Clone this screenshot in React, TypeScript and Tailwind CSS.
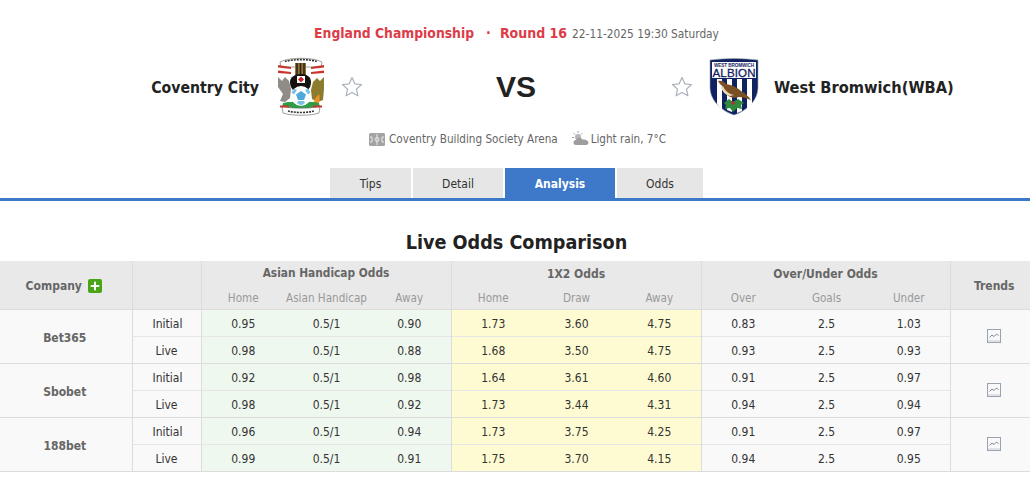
import { LuPlus } from "react-icons/lu";

const font = "font-['DejaVu_Sans_Condensed','Liberation_Sans',sans-serif]";

const rows = [
  {
    name: "Bet365",
    initial: ["0.95", "0.5/1", "0.90", "1.73", "3.60", "4.75", "0.83", "2.5", "1.03"],
    live: ["0.98", "0.5/1", "0.88", "1.68", "3.50", "4.75", "0.93", "2.5", "0.93"],
  },
  {
    name: "Sbobet",
    initial: ["0.92", "0.5/1", "0.98", "1.64", "3.61", "4.60", "0.91", "2.5", "0.97"],
    live: ["0.98", "0.5/1", "0.92", "1.73", "3.44", "4.31", "0.94", "2.5", "0.94"],
  },
  {
    name: "188bet",
    initial: ["0.96", "0.5/1", "0.94", "1.73", "3.75", "4.25", "0.91", "2.5", "0.97"],
    live: ["0.99", "0.5/1", "0.91", "1.75", "3.70", "4.15", "0.94", "2.5", "0.95"],
  },
];

const Star = () => (
  <svg width="22" height="22" viewBox="0 0 22 22" fill="#fff" stroke="#a9b0bb" strokeWidth="1.2" strokeLinejoin="round">
    <path d="M11 1.5l2.800 6.300 6.700.700-5 4.600 1.400 6.700L11 16.400l-5.900 3.400 1.400-6.700-5-4.600 6.700-.700z" />
  </svg>
);

const CoventryBadge = () => (
  <svg width="48" height="60" viewBox="0 0 48 60">
    <path d="M3 5C12 0 36 0 45 5l-1 5H4z" fill="#fff" stroke="#777" strokeWidth="0.7" />
    <path d="M8 4.500c8-2.500 24-2.500 32 0" fill="none" stroke="#333" strokeWidth="1.600" strokeDasharray="2 1" />
    <path d="M1 8l13 2v2L1 10.500zM47 8l-13 2v2l13-1.500z" fill="#c8372e" />
    <path d="M1 13.500l13 1.500v2L1 16zM47 13.500l-13 1.500v2l13-1z" fill="#c8372e" />
    <rect x="18" y="6" width="11" height="12" fill="#93723a" />
    <path d="M20 6v12M23.500 6v12M27 6v12" stroke="#2a2010" strokeWidth="1.500" />
    <path d="M13 25c0-5 5-8 11-8s10 3 10 8c0 3-1 6-3 8H16c-2-2-3-5-3-8z" fill="#15130f" />
    <rect x="20" y="19" width="8" height="7" fill="#fff" />
    <path d="M24 19.500l3 3-3 3-3-3z" fill="#c8272e" />
    <path d="M1 20l4 4 3-4 4 4 2 8-1 9-5 4-5-1 3-7-5-7z" fill="#8f8c88" />
    <path d="M47 20l-4 4-3-3-4 4-2 8 1 9 6 3 5-2 1-11z" fill="#8e7c2e" />
    <path d="M37 46c0-5 3-6 5-9 1 4 1 8-1 11z" fill="#e8932a" />
    <path d="M6 46c8-2 28-2 36 0l1 5H5z" fill="#2f9d45" />
    <circle cx="24" cy="39" r="10" fill="#fff" />
    <path d="M24 34l5 3.500-2 5.500h-6l-2-5.500z" fill="#4fa9dd" />
    <path d="M17 31.500l-2.500 4 2.500 2 3-4.500zM31 31.500l2.500 4-2.500 2-3-4.500zM20 46l1-2h6l1 2-4 2.500z" fill="#7cc0e6" />
    <path d="M5 49c8 3 30 3 38 0l-1 7c-8 3-28 3-36 0z" fill="#fff" stroke="#777" strokeWidth="0.7" />
    <path d="M3 49.500h9M36 49.500h9" stroke="#c8372e" strokeWidth="2" />
    <path d="M11 54c8 2 18 2 26 0" fill="none" stroke="#333" strokeWidth="1.600" strokeDasharray="2 1" />
  </svg>
);

const AlbionBadge = () => (
  <svg width="50" height="58" viewBox="0 0 50 58">
    <path d="M1 2c16-2 32-2 48 0v27c0 14-12 24-24 28C13 53 1 43 1 29z" fill="#10225f" stroke="#9aa0b5" strokeWidth="0.6" />
    <rect x="3" y="4" width="44" height="16" fill="#fff" />
    <text x="25" y="9" textAnchor="middle" fontSize="4.600" fontWeight="700" fill="#10225f" fontFamily="Liberation Sans" textLength="40">
      WEST BROMWICH
    </text>
    <text x="25" y="18.500" textAnchor="middle" fontSize="11.500" fill="#10225f" fontFamily="Liberation Sans" textLength="43" stroke="#10225f" strokeWidth="0.3">
      ALBION
    </text>
    <path d="M8 21h5v31l-5-6zM18 21h5v33l-5-2zM28 21h5v32l-5 2zM38 21h5v25l-5 6z" fill="#fff" />
    <path d="M9 23c3-1 6 0 8 3 6 1 12 4 15 7 4 2 8 6 10 9-5-2-9-3-12-3-6 2-12 0-15-6-1-4-2-6-4-7z" fill="#7a4f24" />
    <path d="M14 28c2 5 6 8 11 9l-4 1c-5-1-8-5-9-9z" fill="#e9d9b2" />
    <path d="M15 45l5-4 4 3 5-3 6 4-3 2 1 4-5-1-4 4-3-4-5 1 1-4z" fill="#2f8a3f" />
    <circle cx="24" cy="45" r="1.800" fill="#c02a2e" />
  </svg>
);

const StadiumIcon = () => (
  <svg width="16" height="13" viewBox="0 0 16 13">
    <rect width="16" height="13" rx="1.500" fill="#a3a3a3" />
    <path d="M8 1v11M1 4h2v5H1M15 4h-2v5h2" stroke="#e8e8e8" fill="none" />
    <circle cx="8" cy="6.500" r="2" stroke="#e8e8e8" fill="none" />
  </svg>
);

const WeatherIcon = () => (
  <svg width="17" height="16" viewBox="0 0 17 16" className="-mt-[3px]">
    <path d="M6 1v2M1.500 3l1.500 1.500M0 7.500h2M10.500 3L9 4.500" stroke="#a3a3a3" strokeWidth="1" />
    <circle cx="6" cy="7" r="3" fill="#b5b5b5" />
    <path d="M4 15a2.500 2.500 0 0 1 0-5c.5-2.500 5-3 6.500-.5 3-.5 6 1 6 3 0 1.500-1 2.500-2.500 2.500z" fill="#9d9d9d" />
  </svg>
);

const TrendIcon = () => (
  <svg width="14" height="14" viewBox="0 0 14 14" fill="none" className="mx-auto">
    <rect x="0.500" y="0.500" width="13" height="13" stroke="#9aa3b0" strokeWidth="1" />
    <path d="M2.500 8.500l2.500-2.500 2 1.500 2.500-2.500 2 1.500" stroke="#7f8896" strokeWidth="1" />
    <path d="M1 12h12" stroke="#c6cad0" />
  </svg>
);

const Tab = ({ label, width, active }: { label: string; width: string; active?: boolean }) => (
  <div
    className={`${width} h-[30px] pt-[2px] flex items-center justify-center text-xs ${
      active ? "bg-[#3d78c9] text-white font-bold" : "bg-[#e6e6e6] text-[#333]"
    }`}
  >
    {label}
  </div>
);

const cellBg = (i: number) => {
  if (i < 3) return "bg-[#eff8ef]";
  if (i < 6) return "bg-[#fefbd2]";
  return "bg-[#f9f9f9]";
};

const OddsCells = ({ values }: { values: string[] }) => (
  <>
    {values.map((v, i) => (
      <td
        key={i}
        className={`${cellBg(i)} text-center p-0 pt-[2px] ${i === 2 || i === 5 || i === 8 ? "border-r border-[#dcdcdc]" : ""}`}
      >
        {v}
      </td>
    ))}
  </>
);

export default function App() {
  return (
    <div className={`${font} w-[1030px] h-[479px] bg-white overflow-hidden text-xs text-[#333]`}>
      <div className="pt-[24px] h-[43px] flex items-baseline justify-center pl-[3px]">
        <span className="text-[13.8px] font-bold text-[#dc3b47]">England Championship</span>
        <span className="text-[14px] font-bold text-[#dc3b47] ml-[12px] mr-[9px]">·</span>
        <span className="text-[14px] font-bold text-[#dc3b47]">Round 16</span>
        <span className="text-[11.8px] text-[#666] ml-[5px]">22-11-2025 19:30 Saturday</span>
      </div>

      <div className="grid grid-cols-[363px_308px_1fr] h-[60px] mt-[14px] items-center">
        <div className="flex items-center justify-end">
          <span className="text-[15.7px] font-bold text-[#222] pt-[2px]">Coventry City</span>
          <div className="ml-[18px] mr-[16px]">
            <CoventryBadge />
          </div>
          <Star />
        </div>
        <div className="text-center text-[30px] font-bold text-[#222] font-['Liberation_Sans',sans-serif] pr-[2px]">VS</div>
        <div className="flex items-center">
          <Star />
          <div className="ml-[16px] mr-[15px]">
            <AlbionBadge />
          </div>
          <span className="text-[16.3px] font-bold text-[#222] pt-[2px]">West Bromwich(WBA)</span>
        </div>
      </div>

      <div className="flex items-center justify-center gap-[14px] mt-[13px] h-[20px] text-[11.6px] text-[#666] pl-[5px]">
        <div className="flex items-center gap-[4px]">
          <StadiumIcon />
          <span>Coventry Building Society Arena</span>
        </div>
        <div className="flex items-center gap-[2px]">
          <WeatherIcon />
          <span>Light rain, 7°C</span>
        </div>
      </div>

      <div className="flex justify-center gap-[2px] mt-[18px] pl-[3px]">
        <Tab label="Tips" width="w-[81px]" />
        <Tab label="Detail" width="w-[90px]" />
        <Tab label="Analysis" width="w-[110px]" active />
        <Tab label="Odds" width="w-[86px]" />
      </div>
      <div className="h-[3px] bg-[#3d78c9]" />

      <h2 className="h-[60px] pt-[28px] pl-[3px] text-center text-[19.6px] leading-[28px] font-bold text-[#222]">
        Live Odds Comparison
      </h2>

      <table className="w-[1030px] table-fixed border-collapse whitespace-nowrap">
        <colgroup>
          <col className="w-[132px]" />
          <col className="w-[69px]" />
          <col className="w-[84px]" />
          <col className="w-[83px]" />
          <col className="w-[83px]" />
          <col className="w-[84px]" />
          <col className="w-[83px]" />
          <col className="w-[83px]" />
          <col className="w-[84px]" />
          <col className="w-[83px]" />
          <col className="w-[82px]" />
          <col className="w-[80px]" />
        </colgroup>
        <thead>
          <tr className="h-[24px] bg-[#e9e9e9] text-[#666] font-bold">
            <th rowSpan={2} className="border-r border-b border-[#dcdcdc] p-0 pt-[2px] pr-[4px]">
              <span className="inline-flex items-center gap-[6px]">
                Company
                <span className="w-[14px] h-[14px] rounded-[2px] bg-[#4aa516] flex items-center justify-center">
                  <LuPlus className="text-white" size={12} strokeWidth={4} />
                </span>
              </span>
            </th>
            <th rowSpan={2} className="border-r border-b border-[#dcdcdc] p-0" />
            <th colSpan={3} className="border-r border-[#dcdcdc] p-0 pt-[2px] text-[11.8px]">
              Asian Handicap Odds
            </th>
            <th colSpan={3} className="border-r border-[#dcdcdc] p-0 pt-[2px]">
              1X2 Odds
            </th>
            <th colSpan={3} className="border-r border-[#dcdcdc] p-0 pt-[2px]">
              Over/Under Odds
            </th>
            <th rowSpan={2} className="border-b border-[#dcdcdc] p-0 pt-[2px] pl-[8px]">
              Trends
            </th>
          </tr>
          <tr className="h-[24px] bg-[#e9e9e9] text-[#999] font-normal border-b border-[#dcdcdc]">
            {["Home", "Asian Handicap", "Away", "Home", "Draw", "Away", "Over", "Goals", "Under"].map((h, i) => (
              <th key={i} className={`font-normal text-[11.6px] p-0 pt-[3px] ${i % 3 === 2 ? "border-r border-[#dcdcdc]" : ""}`}>
                {h}
              </th>
            ))}
          </tr>
        </thead>
        <tbody className="text-[#333]">
          {rows.map((r) => [
            <tr key={r.name + "-initial"} className="h-[27px] border-b border-[#e6e6e6]">
              <td rowSpan={2} className="bg-[#f9f9f9] text-center font-bold text-[#666] border-r border-b border-[#dcdcdc] p-0 pt-[4px] pr-[2px]">
                {r.name}
              </td>
              <td className="bg-[#f9f9f9] text-center border-r border-[#dcdcdc] p-0 pt-[2px] pl-[2px]">Initial</td>
              <OddsCells values={r.initial} />
              <td rowSpan={2} className="bg-[#f9f9f9] border-b border-[#dcdcdc] p-0 pl-[8px]">
                <TrendIcon />
              </td>
            </tr>,
            <tr key={r.name + "-live"} className="h-[27px] border-b border-[#dcdcdc]">
              <td className="bg-[#f9f9f9] text-center border-r border-[#dcdcdc] p-0 pt-[2px]">Live</td>
              <OddsCells values={r.live} />
            </tr>,
          ])}
        </tbody>
      </table>
    </div>
  );
}
